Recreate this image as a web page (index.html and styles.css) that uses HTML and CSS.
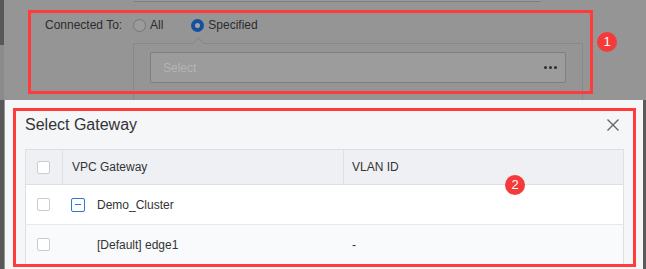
FILE: index.html
```html
<!DOCTYPE html>
<html>
<head>
<meta charset="utf-8">
<link rel="stylesheet" href="styles.css">
</head>
<body>
<div class="screen">
  <div class="dimmed">
    <div class="topbar"></div>
    <div class="form-row">
      <span class="label">Connected To:</span>
      <span class="radio"><span class="dot"></span>All</span>
      <span class="radio radio-gap"><span class="dot on"></span>Specified</span>
    </div>
    <div class="popbox">
      <div class="select">
        <span>Select</span>
        <span class="dots"><i></i><i></i><i></i></span>
      </div>
    </div>
  </div>
  <div class="modal">
    <div class="modal-head">
      <span class="title">Select Gateway</span>
      <svg class="close" width="12" height="12" viewBox="0 0 12 12"><path d="M0.5 0.5L11.5 11.5M11.5 0.5L0.5 11.5" stroke="#666" stroke-width="1.4" fill="none"/></svg>
    </div>
    <div class="grid thead">
      <div class="cell c1"><span class="cb"></span></div>
      <div class="cell c2 sep">VPC Gateway</div>
      <div class="cell c3">VLAN ID</div>
    </div>
    <div class="grid row">
      <div class="cell c1"><span class="cb"></span></div>
      <div class="cell c2 tree"><span class="collapse"></span>Demo_Cluster</div>
      <div class="cell c3"></div>
    </div>
    <div class="grid row alt">
      <div class="cell c1"><span class="cb"></span></div>
      <div class="cell c2 leaf">[Default] edge1</div>
      <div class="cell c3">-</div>
    </div>
  </div>
  <div class="anno anno1"></div>
  <div class="anno anno2"></div>
  <div class="badge badge1">1</div>
  <div class="badge badge2">2</div>
</div>
</body>
</html>
```
FILE: styles.css
```css
html, body {
  margin: 0;
  padding: 0;
}
body {
  width: 646px;
  height: 269px;
  overflow: hidden;
  font-family: "Liberation Sans", Arial, sans-serif;
  background-color: #959595;
  background-image:
    linear-gradient(#585858, #585858),
    linear-gradient(#8b8b8b, #8b8b8b),
    linear-gradient(#585858, #585858),
    linear-gradient(#5a5a5a, #5a5a5a);
  background-repeat: no-repeat;
  background-size: 4px 45px, 4px 55px, 4px 169px, 3px 169px;
  background-position: 0 0, 0 45px, 0 100px, 643px 100px;
}
.screen {
  position: relative;
  width: 646px;
  height: 269px;
}
.dimmed {
  height: 100px;
  overflow: hidden;
}
.topbar {
  margin-left: 133px;
  width: 408px;
  height: 1px;
  background: #9b9b9b;
  border-bottom: 1px solid #7c7c7c;
  border-radius: 0 0 3px 3px;
}
.form-row {
  display: flex;
  align-items: center;
  height: 24px;
  margin-top: 11px;
  font-size: 12px;
  color: #2c2c2c;
}
.label {
  margin-left: 45px;
  width: 88px;
}
.radio {
  display: flex;
  align-items: center;
  gap: 4px;
}
.radio-gap {
  margin-left: 28px;
}
.dot {
  width: 13px;
  height: 13px;
  box-sizing: border-box;
  border-radius: 50%;
  border: 1px solid #777;
  background: #9b9b9b;
}
.dot.on {
  border: 4px solid #14509e;
  background: #a3a3a3;
}
.popbox {
  position: relative;
  margin-left: 133px;
  margin-top: 6px;
  width: 450px;
  height: 60px;
  box-sizing: border-box;
  border: 1px solid #888;
  border-bottom: none;
  padding: 8px 16px 0;
}
.popbox::before {
  content: "";
  position: absolute;
  left: 60px;
  top: -5px;
  width: 8px;
  height: 8px;
  background: #959595;
  border-left: 1px solid #888;
  border-top: 1px solid #888;
  transform: rotate(45deg);
}
.select {
  height: 31px;
  box-sizing: border-box;
  border: 1px solid #7e7e7e;
  border-radius: 2px;
  background: #9c9c9c;
  display: flex;
  align-items: center;
  justify-content: space-between;
  padding: 0 8px 0 12px;
  font-size: 12px;
  color: #b4b4b4;
}
.dots {
  display: flex;
  gap: 2px;
}
.dots i {
  width: 3px;
  height: 3px;
  border-radius: 50%;
  background: #2e2e2e;
}
.modal {
  margin-left: 5px;
  width: 638px;
  height: 169px;
  box-sizing: border-box;
  background: #f5f6f8;
  padding: 0 19px 0 20px;
  color: #333;
}
.modal-head {
  height: 49px;
  display: flex;
  align-items: center;
  justify-content: space-between;
}
.title {
  font-size: 16px;
  color: #333;
}
.close {
  margin-right: 5px;
}
.grid {
  display: grid;
  grid-template-columns: 37px 281px 1fr;
  box-sizing: border-box;
  font-size: 12px;
  align-items: stretch;
}
.cell {
  display: flex;
  align-items: center;
}
.thead {
  height: 36px;
  background: #eff0f3;
  border: 1px solid #dcdfe6;
}
.thead .c1 {
  border-right: 1px solid #dcdfe6;
}
.thead .sep {
  border-right: 1px solid #dcdfe6;
}
.c1 {
  padding-left: 11px;
}
.c2 {
  padding-left: 9px;
}
.c3 {
  padding-left: 8px;
}
.row {
  height: 40px;
  background: #fff;
  border-left: 1px solid #dcdfe6;
  border-right: 1px solid #dcdfe6;
  border-bottom: 1px solid #e6e8ec;
}
.row.alt {
  background: #f9fafc;
}
.row .c2 {
  padding-left: 8px;
}
.row .leaf {
  padding-left: 34px;
}
.cb {
  width: 13px;
  height: 13px;
  box-sizing: border-box;
  border: 1px solid #c9ccd2;
  border-radius: 2px;
  background: #fff;
}
.collapse {
  position: relative;
  width: 14px;
  height: 14px;
  box-sizing: border-box;
  border: 1px solid #2f74d6;
  border-radius: 2px;
  margin-right: 12px;
  background: #fff;
}
.collapse::after {
  content: "";
  position: absolute;
  left: 3px;
  top: 5px;
  width: 6px;
  height: 1px;
  background: #2f74d6;
}
.anno {
  position: absolute;
  box-sizing: border-box;
  border: 3px solid #ff3b3b;
}
.anno1 {
  left: 28px;
  top: 10px;
  width: 565px;
  height: 84px;
}
.anno2 {
  left: 13px;
  top: 108px;
  width: 623px;
  height: 159px;
}
.badge {
  position: absolute;
  width: 20px;
  height: 20px;
  border-radius: 50%;
  background: #f53a3a;
  color: #fff;
  font-size: 13px;
  line-height: 20px;
  text-align: center;
}
.badge1 {
  left: 597px;
  top: 32px;
}
.badge2 {
  left: 505px;
  top: 175px;
}
```
